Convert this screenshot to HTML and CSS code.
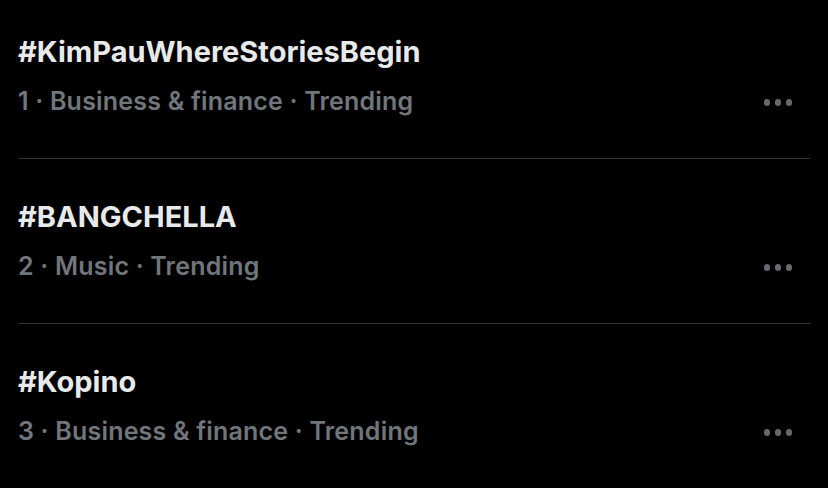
FILE: index.html
```html
<!DOCTYPE html>
<html>
<head>
<meta charset="utf-8">
<link rel="stylesheet" href="styles.css">
</head>
<body>
<div class="list">
  <div class="trend first">
    <div class="text">
      <div class="title">#KimPauWhereStoriesBegin</div>
      <div class="meta">1 · Business &amp; finance · Trending</div>
    </div>
    <div class="more"><span></span><span></span><span></span></div>
  </div>
  <div class="trend">
    <div class="text">
      <div class="title">#BANGCHELLA</div>
      <div class="meta">2 · Music · Trending</div>
    </div>
    <div class="more"><span></span><span></span><span></span></div>
  </div>
  <div class="trend last">
    <div class="text">
      <div class="title">#Kopino</div>
      <div class="meta">3 · Business &amp; finance · Trending</div>
    </div>
    <div class="more"><span></span><span></span><span></span></div>
  </div>
</div>
</body>
</html>
```
FILE: styles.css
```css
html, body {
  margin: 0;
  padding: 0;
  background: #000;
  width: 828px;
  height: 488px;
  overflow: hidden;
}
.list {
  display: flex;
  flex-direction: column;
  padding: 0 18px;
  font-family: Inter, "Noto Sans", sans-serif;
}
.trend {
  display: flex;
  align-items: flex-start;
  justify-content: space-between;
  box-sizing: border-box;
  height: 165px;
  padding-top: 40px;
  border-bottom: 1px solid #2f3336;
}
.trend.first {
  height: 159px;
  padding-top: 34px;
}
.trend.last { border-bottom: none; }
.text {
  display: flex;
  flex-direction: column;
  gap: 16px;
}
.title {
  color: #e7e9ea;
  font-size: 29px;
  font-weight: 700;
  line-height: 36px;
  letter-spacing: 0;
}
.meta {
  color: #71767b;
  font-size: 25px;
  font-weight: 600;
  line-height: 30px;
  letter-spacing: 0.2px;
}
.more {
  display: flex;
  gap: 4.5px;
  margin-right: 18px;
  margin-top: 65px;
}
.more span {
  width: 6.5px;
  height: 6.5px;
  border-radius: 50%;
  background: #65696d;
}
```
